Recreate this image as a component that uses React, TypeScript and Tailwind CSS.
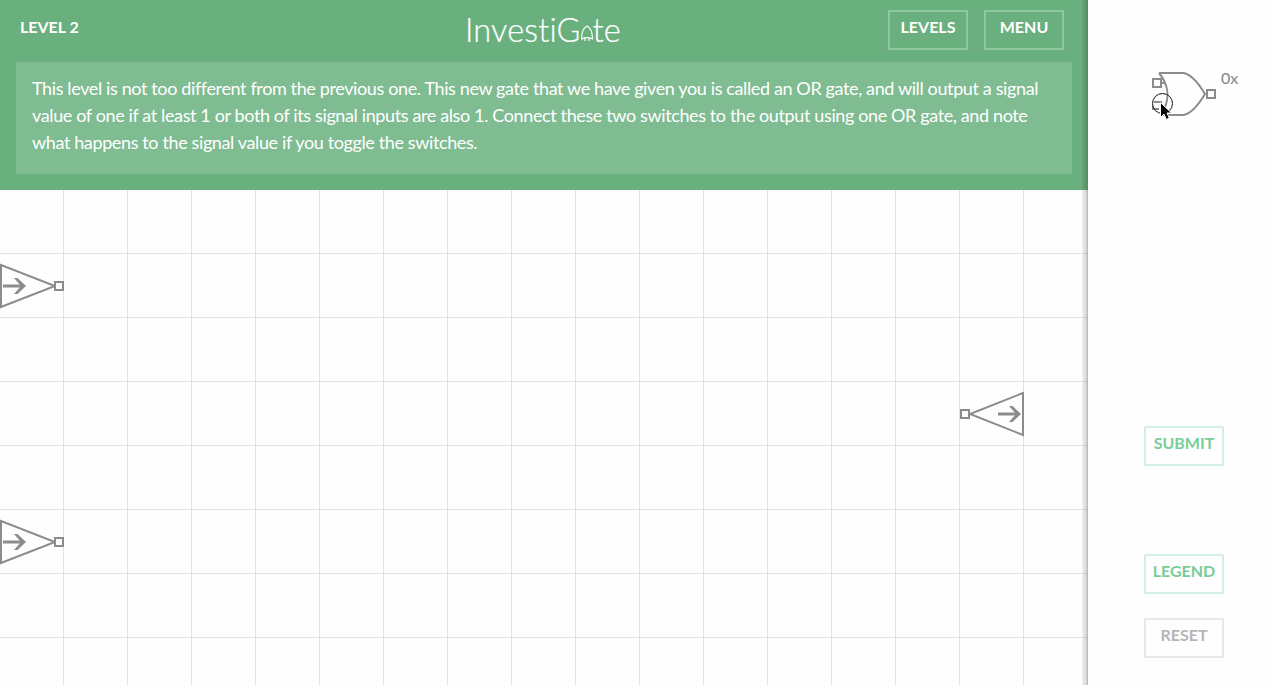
import type { ReactNode } from 'react';

function InputSwitch() {
  return (
    <svg className="block h-12 w-16" viewBox="0 0 64 48" fill="none" stroke="#8c8c8c" strokeWidth="2">
      <path d="M1 3V45L55 24Z" />
      <path d="M3 24H24" strokeWidth="3" />
      <path d="M14 16H17.500L26 24L17.500 32H14L21 24Z" fill="#8c8c8c" stroke="none" />
      <rect x="55" y="20" width="8" height="8" fill="#fefefe" />
    </svg>
  );
}

function OutputLamp() {
  return (
    <svg className="block h-12 w-16" viewBox="0 0 64 48" fill="none" stroke="#8c8c8c" strokeWidth="2">
      <path d="M63 3V45L10 24Z" />
      <path d="M38 24H59" strokeWidth="3" />
      <path d="M49 16H52.500L61 24L52.500 32H49L56 24Z" fill="#8c8c8c" stroke="none" />
      <rect x="1" y="20" width="8" height="8" fill="#fefefe" />
    </svg>
  );
}

function OrGate() {
  return (
    <svg className="block h-[50px] w-[66px]" viewBox="0 0 66 50" fill="none" stroke="#8c8c8c" strokeWidth="2">
      <path d="M9 4H33C42 5 49 15 55 25C49 35 42 45 33 46H11M9 4C18 15 20 28 14 40" />
      <path d="M11 14H15" />
      <rect x="3" y="10" width="8" height="8" fill="#fefefe" />
      <path d="M4 33H12M3 37V40H9" />
      <rect x="57" y="21" width="8" height="8" fill="#fefefe" />
    </svg>
  );
}

function Pointer() {
  return (
    <svg className="absolute left-[63px] top-[92px] h-7 w-7" viewBox="0 0 28 28">
      <circle cx="11.5" cy="11.5" r="10" fill="none" stroke="#111" strokeWidth="1" />
      <path d="M9.500 10.500V25.500L13 22L15.300 27.500L18.300 26.200L16 21H20.500Z" fill="#000" stroke="#fff" strokeWidth="1" />
    </svg>
  );
}

function Button({ tone, children }: { tone: string; children: ReactNode }) {
  return (
    <button className={`flex h-10 w-20 shrink-0 justify-center border-2 pt-[3px] text-base leading-6 font-bold whitespace-nowrap ${tone}`}>
      {children}
    </button>
  );
}

function Logo() {
  return (
    <h1 className="flex h-[60px] w-[160px] items-start pt-[9px] text-[32.500px] leading-[42px] font-light tracking-[0.15px] text-white [-webkit-text-stroke:0.2px_#fff]">
      <span>InvestiG</span>
      <svg className="mt-[16px] h-4 w-3 shrink-0" viewBox="0 0 12 16" fill="none" stroke="#fff" strokeWidth="1.2">
        <path d="M.7 14C.4 8 2.500 3 6 1C9.500 3 11.600 8 11.300 14C8 12.300 4 12.300 .7 14ZM4 13.500V16M8 13.500V16" />
      </svg>
      <span>te</span>
    </h1>
  );
}

export default function App() {
  return (
    <div className="flex h-[685px] w-[1274px] overflow-hidden bg-[#fefefe] font-['Lato',sans-serif]">
      <main className="relative flex w-[1088px] shrink-0 flex-col">
        <header className="h-[190px] shrink-0 bg-[#6ab07f] px-4 text-white">
          <div className="grid h-[62px] grid-cols-[449px_1fr_184px]">
            <div className="pt-[15px] pl-1 text-base leading-6 font-bold">LEVEL 2</div>
            <Logo />
            <div className="flex gap-4 pt-[10px]">
              <Button tone="border-[#8fc59f] text-white">LEVELS</Button>
              <Button tone="border-[#8fc59f] text-white">MENU</Button>
            </div>
          </div>
          <p className="h-28 bg-[#7fbc92] pt-[13px] pl-4 text-[18px] leading-[27px] tracking-[-0.375px] whitespace-nowrap">
            This level is not too different from the previous one. This new gate that we have given you is called an OR gate, and will output a signal<br />
            value of one if at least 1 or both of its signal inputs are also 1. Connect these two switches to the output using one OR gate, and note<br />
            what happens to the signal value if you toggle the switches.
          </p>
        </header>
        <section className="relative flex-1 bg-[linear-gradient(to_right,transparent_63px,#e2e2e2_63px),linear-gradient(to_bottom,transparent_63px,#e2e2e2_63px)] bg-[size:64px_64px]">
          <div className="absolute top-[72px] left-0"><InputSwitch /></div>
          <div className="absolute top-[328px] left-0"><InputSwitch /></div>
          <div className="absolute top-[200px] left-[960px]"><OutputLamp /></div>
        </section>
        <div className="absolute inset-y-0 right-0 w-1.5 bg-linear-to-r from-black/5 to-black/20" />
      </main>
      <aside className="relative flex flex-1 flex-col bg-[#fefefe]">
        <div className="flex h-[426px] pt-[69px] pl-[62px] pr-5">
          <OrGate />
          <span className="pl-[5px] pt-px text-base leading-4 text-[#8c8c8c] [-webkit-text-stroke:0.15px_#8c8c8c]">0x</span>
        </div>
        <div className="flex flex-col items-start pl-14">
          <Button tone="border-[#d5f0e1] text-[#78cd97]">SUBMIT</Button>
          <div className="mt-[88px]"><Button tone="border-[#d5f0e1] text-[#78cd97]">LEGEND</Button></div>
          <div className="mt-6"><Button tone="border-[#e8e8e8] text-[#b5b5b5]">RESET</Button></div>
        </div>
        <Pointer />
      </aside>
    </div>
  );
}
